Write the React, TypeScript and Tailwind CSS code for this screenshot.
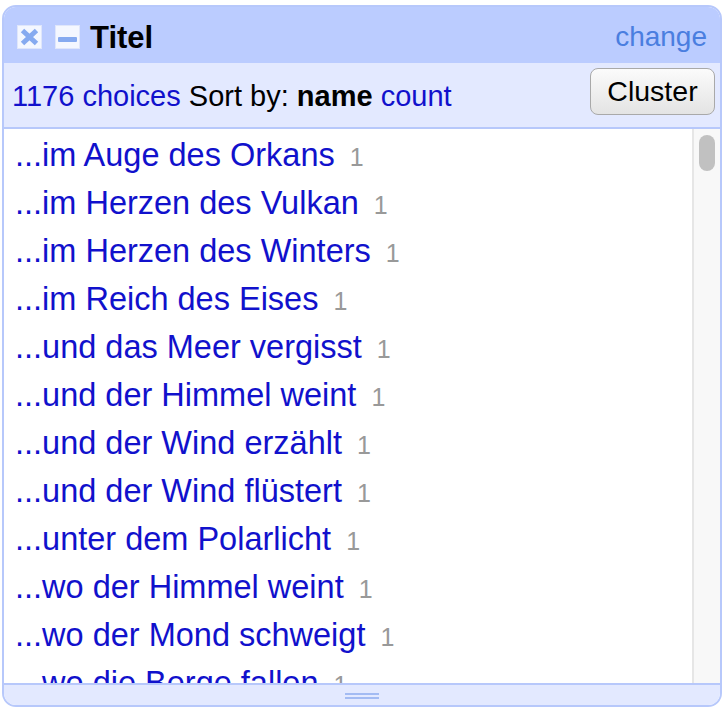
const choices = [
  "...im Auge des Orkans",
  "...im Herzen des Vulkan",
  "...im Herzen des Winters",
  "...im Reich des Eises",
  "...und das Meer vergisst",
  "...und der Himmel weint",
  "...und der Wind erzählt",
  "...und der Wind flüstert",
  "...unter dem Polarlicht",
  "...wo der Himmel weint",
  "...wo der Mond schweigt",
  "...wo die Berge fallen",
  "...wo die Sterne wohnen",
];

const font = { fontFamily: '"Liberation Sans", Arial, Helvetica, sans-serif' };

function CloseIcon() {
  return (
    <svg width="25" height="24" viewBox="0 0 25 24" className="shrink-0">
      <rect x="0.5" y="0.5" width="24" height="23" fill="#f4f7ff" stroke="#dfe6fb" />
      <path d="M5.5 5.5 L19.5 18.5 M19.5 5.5 L5.5 18.5" stroke="#86aaf0" strokeWidth="5" />
    </svg>
  );
}

function MinimizeIcon() {
  return (
    <svg width="25" height="24" viewBox="0 0 25 24" className="shrink-0">
      <rect x="0.5" y="0.5" width="24" height="23" fill="#f4f7ff" stroke="#dfe6fb" />
      <rect x="3" y="12" width="19" height="5" rx="1" fill="#86aaf0" />
    </svg>
  );
}

export default function App() {
  return (
    <div className="h-[710px] w-[724px] bg-white px-[2px] pt-[5px]" style={font}>
      <div className="flex h-[702px] w-[720px] flex-col overflow-hidden rounded-[14px] border-2 border-[#b7c8fb]">
        {/* header */}
        <div className="flex h-[56px] shrink-0 items-center bg-[#bbccff] pl-[13px] pr-[13px] pt-[4px]">
          <CloseIcon />
          <div className="ml-[13px]">
            <MinimizeIcon />
          </div>
          <span className="ml-[10px] text-[31px] font-bold leading-none text-black">Titel</span>
          <span className="ml-auto text-[28px] leading-none text-[#4a7ee0]">change</span>
        </div>

        {/* sort bar */}
        <div className="flex h-[66px] shrink-0 items-center border-b-2 border-[#b7c8fb] bg-[#e3e9ff] pl-[8px] pr-[5px] pt-[2px]">
          <span className="text-[29px] leading-none whitespace-nowrap">
            <span className="text-[#1111cc]">1176 choices</span>{" "}
            <span className="text-black">Sort by: </span>
            <span className="font-bold text-black">name</span>{" "}
            <span className="text-[#1111cc]">count</span>
          </span>
          <button
            type="button"
            className="ml-auto mt-[3px] h-[47px] w-[125px] self-start rounded-[8px] border border-[#a9a9a9] bg-gradient-to-b from-[#fbfbfb] to-[#e4e4e4] text-[28.5px] leading-none text-black"
          >
            Cluster
          </button>
        </div>

        {/* choices list */}
        <div className="flex min-h-0 flex-1 bg-white">
          <div className="min-w-0 flex-1 overflow-hidden pl-[11px] pt-[2px]">
            {choices.map((c) => (
              <div key={c} className="h-[48px] whitespace-nowrap text-[32.5px] leading-[48px]">
                <span className="text-[#1111cc]">{c}</span>
                <span className="ml-[15px] text-[25px] text-[#999999]">1</span>
              </div>
            ))}
          </div>
          <div className="w-[28px] shrink-0 border-l-2 border-[#e6e6e6] bg-[#f8f8f8] pl-[5px] pt-[6px]">
            <div className="h-[36px] w-[16px] rounded-full bg-[#c1c1c1]" />
          </div>
        </div>

        {/* resize footer */}
        <div className="flex h-[22px] shrink-0 flex-col items-center justify-center gap-[2px] border-t-2 border-[#b7c8fb] bg-[#e3e9ff] pt-[2px]">
          <div className="h-[2px] w-[34px] bg-[#a3bbf3]" />
          <div className="h-[2px] w-[34px] bg-[#a3bbf3]" />
        </div>
      </div>
    </div>
  );
}
